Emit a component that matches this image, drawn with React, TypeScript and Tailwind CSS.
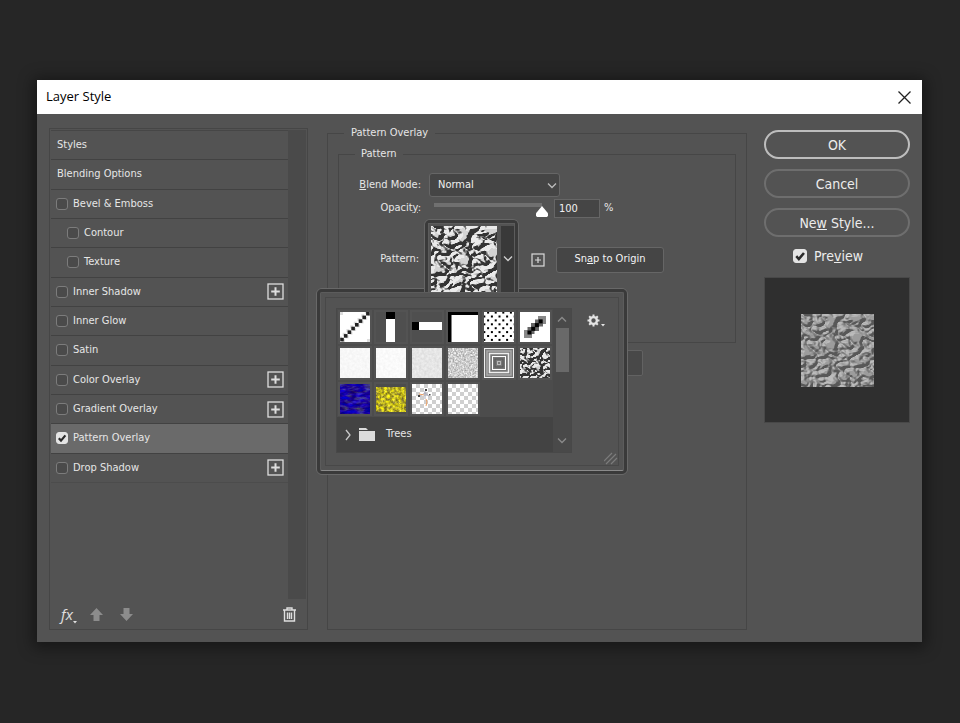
import React from "react";

type Effect = { name: string; level?: number; checked?: boolean; add?: boolean };

const effects: Effect[] = [
  { name: "Bevel & Emboss" },
  { name: "Contour", level: 1 },
  { name: "Texture", level: 1 },
  { name: "Inner Shadow", add: true },
  { name: "Inner Glow" },
  { name: "Satin" },
  { name: "Color Overlay", add: true },
  { name: "Gradient Overlay", add: true },
  { name: "Pattern Overlay", checked: true },
  { name: "Drop Shadow", add: true },
];

/* ---------- icons ---------- */

function PlusBox({ size }: { size: number }) {
  return (
    <svg width={size} height={size} viewBox="0 0 17 17" fill="none" stroke="#dedede" aria-hidden="true">
      <rect x="1" y="1" width="15" height="15" strokeWidth="1.3" />
      <path d="M8.5 4.2v8.6M4.2 8.5h8.6" strokeWidth="2" />
    </svg>
  );
}

function Chevron({ dir, className }: { dir: "up" | "down" | "right"; className?: string }) {
  const d = { up: "M1 6.5 5 2.5l4 4", down: "M1 2.5l4 4 4-4", right: "M3 0l4 5-4 5" }[dir];
  return (
    <svg width="10" height="10" viewBox="0 0 10 10" fill="none" stroke="currentColor" strokeWidth="1.3" overflow="visible" className={className} aria-hidden="true">
      <path d={d} />
    </svg>
  );
}

function Tick({ className }: { className: string }) {
  return (
    <svg viewBox="0 0 12 12" fill="none" stroke="#2a2a2a" strokeWidth="2.2" className={className} aria-hidden="true">
      <path d="M2.8 6.2 5 8.6 9.4 3.4" />
    </svg>
  );
}

function CheckBox({ id, checked, big }: { id: string; checked?: boolean; big?: boolean }) {
  return (
    <span className={big ? "relative block size-[14px] shrink-0" : "relative block size-3 shrink-0"}>
      <input
        id={id}
        type="checkbox"
        defaultChecked={checked}
        className="peer block size-full appearance-none rounded-[3px] border border-[#7c7c7c] bg-[#4a4a4a] checked:border-[#e4e4e4] checked:bg-[#e4e4e4]"
      />
      <Tick className="pointer-events-none absolute inset-0 hidden size-full peer-checked:block" />
    </span>
  );
}

/* ---------- pattern swatches ---------- */

function Marble({ id, size, soft, freq = 0.09 }: { id: string; size: number; soft?: boolean; freq?: number }) {
  const slope = soft ? 0.9 : 2.2;
  const intercept = soft ? 0.02 : -0.6;
  const low = soft ? 0.34 : 0.2;
  const range = soft ? 0.44 : 0.72;
  return (
    <svg width={size} height={size} className="block" aria-hidden="true">
      <filter id={id} x="0" y="0" width="100%" height="100%" colorInterpolationFilters="sRGB">
        <feTurbulence type="turbulence" baseFrequency={`${freq * 0.8} ${freq * 1.1}`} numOctaves={2} seed={12} />
        <feColorMatrix values="0 0 0 0 0  0 0 0 0 0  0 0 0 0 0  2.4 0 0 0 0" />
        <feGaussianBlur stdDeviation="0.5" />
        <feDiffuseLighting surfaceScale="4" diffuseConstant="1" lightingColor="#fff">
          <feDistantLight azimuth="230" elevation="42" />
        </feDiffuseLighting>
        <feComponentTransfer>
          <feFuncR type="linear" slope={slope} intercept={intercept} />
          <feFuncG type="linear" slope={slope} intercept={intercept} />
          <feFuncB type="linear" slope={slope} intercept={intercept} />
        </feComponentTransfer>
        <feComponentTransfer>
          <feFuncR type="linear" slope={range} intercept={low} />
          <feFuncG type="linear" slope={range} intercept={low} />
          <feFuncB type="linear" slope={range} intercept={low} />
        </feComponentTransfer>
      </filter>
      <rect width={size} height={size} filter={`url(#${id})`} />
    </svg>
  );
}

function Grain({ id, matrix, freq, height = 30 }: { id: string; matrix: string; freq: string; height?: number }) {
  return (
    <svg width="30" height={height} className="block" aria-hidden="true">
      <filter id={id} x="0" y="0" width="100%" height="100%" colorInterpolationFilters="sRGB">
        <feTurbulence type="fractalNoise" baseFrequency={freq} numOctaves={3} seed={4} />
        <feColorMatrix values={matrix} />
      </filter>
      <rect width="30" height={height} filter={`url(#${id})`} />
    </svg>
  );
}

function Drawn({ children, bg = "#fff" }: { children?: React.ReactNode; bg?: string }) {
  return (
    <svg width="30" height="30" viewBox="0 0 30 30" className="block" aria-hidden="true">
      <rect width="30" height="30" fill={bg} />
      {children}
    </svg>
  );
}

const steps = [0, 1, 2, 3, 4, 5, 6, 7];

function Checker() {
  return (
    <g fill="#cfcfcf">
      {steps.flatMap((r) =>
        steps.filter((c) => (r + c) % 2 === 1).map((c) => <rect key={`${r}-${c}`} x={c * 4} y={r * 4} width="4" height="4" />),
      )}
    </g>
  );
}

const swatches: [string, React.ReactNode][] = [
  ["Diagonal line", (
    <Drawn>
      {steps.map((i) => (
        <g key={i}>
          <rect x={i * 3.7 - 1} y={24.500 - i * 3.7} width="3" height="3" fill="#ddd" />
          <rect x={i * 3.7 + 2} y={27 - i * 3.7} width="3" height="3" fill="#ddd" />
          <rect x={i * 3.7 + 0.2} y={25.800 - i * 3.7} width="3.600" height="3.600" fill="#222" />
        </g>
      ))}
      <path d="M0 0h3v3H0zM27 27h3v3h-3z" fill="#ddd" />
    </Drawn>
  )],
  ["Vertical line", (
    <Drawn bg="#4f4f4f">
      <rect x="10" width="9" height="30" fill="#fff" />
      <rect x="10" width="9" height="7" />
    </Drawn>
  )],
  ["Horizontal line", (
    <Drawn bg="#4f4f4f">
      <rect y="10" width="30" height="8" fill="#fff" />
      <rect y="10" width="7" height="8" />
    </Drawn>
  )],
  ["Grid", (
    <Drawn>
      <path d="M0 0h30v3H3.500v27H0z" />
    </Drawn>
  )],
  ["Dots", (
    <Drawn>
      {steps.flatMap((r) =>
        [0, 1, 2, 3, 4].map((c) => (
          <rect key={`${r}-${c}`} x={c * 7.6 + (r % 2 ? -0.7 : 3.1)} y={r * 3.9 - 0.4} width="2" height="2" />
        )),
      )}
    </Drawn>
  )],
  ["Thick diagonal", (
    <Drawn>
      <g fill="#888">
        <rect x="4" y="18" width="8" height="8" />
        <rect x="18" y="4" width="8" height="8" />
        <rect x="7.500" y="15" width="7" height="7" fill="#666" />
        <rect x="11" y="11" width="8" height="8" fill="#666" />
        <rect x="15" y="7.500" width="8" height="7" fill="#666" />
      </g>
      {[0, 1, 2, 3].map((i) => (
        <rect key={i} x={7.5 + i * 3.7} y={18.500 - i * 3.7} width="4" height="4" />
      ))}
    </Drawn>
  )],
  ["Light paper", <Grain id="g1" freq="0.4" matrix=".06 0 0 0 .94  .06 0 0 0 .94  .06 0 0 0 .94  0 0 0 0 1" />],
  ["White paper", <Grain id="g2" freq="0.4" matrix=".06 0 0 0 .95  .06 0 0 0 .95  .06 0 0 0 .95  0 0 0 0 1" />],
  ["Gray paper", <Grain id="g3" freq="0.4" matrix=".12 0 0 0 .84  .12 0 0 0 .84  .12 0 0 0 .84  0 0 0 0 1" />],
  ["Gray granite", <Grain id="g4" freq="0.6" matrix=".6 0 0 0 .5  .6 0 0 0 .5  .6 0 0 0 .5  0 0 0 0 1" />],
  ["Concentric squares", (
    <Drawn bg="#777">
      <g fill="none" stroke="#eee">
        <rect x=".5" y=".5" width="29" height="29" strokeWidth="1" />
        <rect x="3" y="3" width="24" height="24" stroke="#aaa" strokeWidth="1.500" />
        <rect x="5.500" y="5.500" width="19" height="19" strokeWidth="1.500" />
        <rect x="8.500" y="8.500" width="13" height="13" stroke="#fff" />
        <rect x="11" y="11" width="8" height="8" stroke="#555" />
        <rect x="13.500" y="13.500" width="3" height="3" stroke="#bbb" />
      </g>
    </Drawn>
  )],
  ["Marble", <Marble id="m3" size={30} freq={0.16} />],
  ["Blue water", <Grain id="g5" freq="0.12 0.3" matrix=".5 0 0 0 -.12  .8 0 0 0 -.36  0 .7 0 0 .25  0 0 0 0 1" />],
  ["Yellow flowers", (
    <span className="flex h-[30px] items-center">
      <Grain id="g6" freq="0.35" height={25} matrix="1 0 0 0 .24  1 0 0 0 .2  0 .4 0 0 -.06  0 0 0 0 1" />
    </span>
  )],
  ["Figure", (
    <Drawn>
      <Checker />
      <path d="M13 5h2v2h-2zM6 11h2v2H6zM17 10h1.500v1.500H17z" fill="#444" />
      <path d="M8 12l5-3 4 3M13 7v8" stroke="#aab" fill="none" />
      <path d="M7 10l5 1M14 15l1 3-1 4" stroke="#eda266" fill="none" />
    </Drawn>
  )],
  ["Transparent", <Drawn><Checker /></Drawn>],
];

/* ---------- panels ---------- */

function EffectList() {
  const row = "flex items-center border-b border-[#424242] pr-1";
  return (
    <aside className="flex w-[259px] shrink-0 flex-col border border-[#464646] px-px pt-px">
      <div className="flex flex-1">
        <div className="min-w-0 flex-1 border-t border-[#464646]">
          <ul className="grid h-[352px] auto-rows-fr">
            <li className={`${row} pl-[6px]`}><button className="w-full text-left">Styles</button></li>
            <li className={`${row} pl-[6px]`}><button className="w-full text-left">Blending Options</button></li>
            {effects.map((e) => {
              const id = e.name.replace(/\W+/g, "-").toLowerCase();
              return (
                <li key={e.name} className={`${row} gap-[5px] ${e.level ? "pl-4" : "pl-[5px]"} ${e.checked ? "bg-[#6a6a6a]" : ""} last:border-[#4c4c4c]`}>
                  <CheckBox id={id} checked={e.checked} />
                  <label htmlFor={id} className="flex-1">{e.name}</label>
                  {e.add && (
                    <button aria-label={`Add ${e.name}`} title={`Add ${e.name}`}><PlusBox size={17} /></button>
                  )}
                </li>
              );
            })}
          </ul>
        </div>
        <div className="w-[18px] bg-[#4a4a4a]" />
      </div>
      <div className="flex h-[30px] items-center pr-[10px] pl-[10px] text-[#8c8c8c]">
        <button aria-label="Effects" className="flex w-[29px] items-end text-[#e0e0e0]">
          <span className="font-['Open_Sans',sans-serif] text-[15px] leading-5 font-medium italic">fx</span>
          <svg width="4" height="3" viewBox="0 0 4 3" fill="currentColor" aria-hidden="true"><path d="M0 0h4L2 2.500z" /></svg>
        </button>
        <button aria-label="Move up" className="mr-[17px]">
          <svg width="13" height="13" viewBox="0 0 13 13" fill="currentColor" aria-hidden="true"><path d="M6.500 0 13 7H9.500v6h-6V7H0z" /></svg>
        </button>
        <button aria-label="Move down">
          <svg width="13" height="13" viewBox="0 0 13 13" fill="currentColor" aria-hidden="true"><path d="M6.500 13 13 6H9.500V0h-6v6H0z" /></svg>
        </button>
        <button aria-label="Delete" className="ml-auto text-[#dedede]">
          <svg width="13" height="15" viewBox="0 0 13 15" fill="none" stroke="currentColor" strokeWidth="1.400" aria-hidden="true">
            <path d="M0 3h13M4 3V1h5v2M1.500 3v11h10V3M4.500 5.500v6.500M6.500 5.500v6.500M8.500 5.500v6.500" />
          </svg>
        </button>
      </div>
    </aside>
  );
}

function PatternPopup() {
  return (
    <div className="absolute top-[69px] -left-[108px] w-[312px] rounded-[6px] border border-[#686868]">
      <div className="rounded-[5px] border-[3px] border-[#3a3a3a]">
        <div className="rounded-[2px] border border-[#5c5c5c] border-b-[#8a8a8a] bg-[#535353] p-1">
          <div className="flex border border-[#484848] bg-[#535353] pt-[10px] pb-3 pl-[10px]">
            <div className="flex w-[236px] border border-[#484848] bg-[#4c4c4c]">
              <div className="min-w-0 flex-1">
                <div className="grid grid-cols-[repeat(6,30px)] gap-[6px] px-[3px] py-[3px]">
                  {swatches.map(([name, art]) => (
                    <button key={name} title={name} aria-label={name} className="size-[30px] outline-2 outline-[#535353]">{art}</button>
                  ))}
                </div>
                <button className="flex h-[35px] w-full items-center bg-[#434343] pl-1 text-left">
                  <Chevron dir="right" className="ml-[2px] text-[#c8c8c8]" />
                  <svg width="17" height="13" viewBox="0 0 17 13" fill="#dcdcdc" className="mr-[10px] ml-[6px]" aria-hidden="true">
                    <path d="M0 0h7l2 2h-9zM0 3h16v10H0z" />
                  </svg>
                  Trees
                </button>
              </div>
              <div className="flex w-[18px] flex-col items-center bg-[#494949] py-[6px] text-[#8a8a8a]">
                <Chevron dir="up" />
                <div className="mt-[3px] h-11 w-[13px] bg-[#696969]" />
                <Chevron dir="down" className="mt-auto" />
              </div>
            </div>
            <div className="flex flex-1 flex-col justify-between pl-[15px]">
              <button aria-label="Pattern options" className="flex items-end pt-[6px] text-[#e4e4e4]">
                <svg width="13" height="13" viewBox="0 0 13 13" aria-hidden="true">
                  <circle cx="6.500" cy="6.500" r="3.400" fill="none" stroke="currentColor" strokeWidth="2.400" />
                  <path d="M6.500 .5v2.500M6.500 10v2.500M.5 6.500h2.500M10 6.500h2.500M2.200 2.200l2 2M8.800 8.800l2 2M2.200 10.800l2-2M8.800 4.200l2-2" stroke="currentColor" strokeWidth="2" />
                </svg>
                <svg width="4" height="3" viewBox="0 0 4 3" fill="currentColor" className="ml-px" aria-hidden="true"><path d="M0 0h4L2 2.500z" /></svg>
              </button>
              <svg width="14" height="13" viewBox="0 0 14 13" className="-mb-3 self-end" stroke="#7c7c7c" strokeWidth="1.200" aria-hidden="true">
                <path d="M0 9 8 1M2 12 12 2M7 12l6-6" />
              </svg>
            </div>
          </div>
        </div>
      </div>
    </div>
  );
}

function PatternPicker() {
  return (
    <div className="relative ml-[3px] h-[73px] w-[95px] shrink-0">
      <PatternPopup />
      <button aria-label="Pattern: Marble" className="relative block h-full w-full rounded-t-[6px] border border-b-0 border-[#666]">
        <span className="block h-full rounded-t-[5px] border-[3px] border-b-0 border-[#3a3a3a]">
          <span className="flex h-full border border-b-0 border-[#5c5c5c] bg-[#535353] pt-[2px] pl-[2px]">
            <span className="block h-[66px] overflow-hidden"><Marble id="m1" size={67} /></span>
            <span className="ml-1 flex w-[13px] items-center justify-center bg-[#393939] text-[#d0d0d0]">
              <Chevron dir="down" />
            </span>
          </span>
        </span>
      </button>
    </div>
  );
}

function Settings() {
  return (
    <fieldset className="mt-[11px] min-w-0 flex-1 border border-[#464646] px-[10px] pt-[5px]">
      <legend className="ml-[6px] px-[7px] leading-4">Pattern Overlay</legend>
      <fieldset className="h-[197px] min-w-0 border border-[#464646] pt-[11px]">
        <legend className="ml-[16px] px-[6px] leading-4">Pattern</legend>
        <div className="flex items-center">
          <label htmlFor="mode" className="w-[82px] text-right"><u>B</u>lend Mode:</label>
          <span className="relative ml-2 block w-[131px]">
            <select id="mode" className="block h-6 w-full appearance-none rounded-[3px] border border-[#666] bg-[#454545] pl-2 text-[#f0f0f0]">
              <option>Normal</option>
              <option>Multiply</option>
            </select>
            <Chevron dir="down" className="pointer-events-none absolute top-2 right-[3px] text-[#bdbdbd]" />
          </span>
        </div>
        <div className="flex h-[22px] items-center">
          <label htmlFor="opacity" className="w-[82px] text-right">Opacit<u>y</u>:</label>
          <input
            id="opacity"
            type="range"
            defaultValue={100}
            className="mt-1 ml-[13px] block h-[14px] w-[114px] appearance-none bg-transparent bg-[linear-gradient(#707070,#707070)] bg-[length:108px_4px] bg-no-repeat [&::-webkit-slider-runnable-track]:h-[14px] [&::-webkit-slider-thumb]:mt-[3px] [&::-webkit-slider-thumb]:h-[11px] [&::-webkit-slider-thumb]:w-3 [&::-webkit-slider-thumb]:appearance-none [&::-webkit-slider-thumb]:bg-white [&::-webkit-slider-thumb]:[clip-path:polygon(50%_0,100%_65%,100%_90%,90%_100%,10%_100%,0_90%,0_65%)]"
          />
          <input aria-label="Opacity percent" defaultValue="100" className="ml-[6px] h-[19px] w-[46px] border border-[#666] bg-[#454545] pl-1 text-[#f0f0f0]" />
          <span className="ml-1">%</span>
        </div>
        <div className="flex items-center">
          <span className="w-[82px] pt-2 pr-[2px] text-right">Pattern:</span>
          <PatternPicker />
          <button aria-label="New preset" className="mt-2 ml-[12px]">
            <svg width="14" height="14" viewBox="0 0 14 14" fill="none" stroke="#dadada" strokeWidth="1.200" aria-hidden="true">
              <rect x="1" y="1" width="12" height="12" />
              <path d="M7 4v6M4 7h6" />
            </svg>
          </button>
          <button className="mt-2 ml-[11px] h-[26px] w-[108px] rounded-[3px] border border-[#666] bg-[#454545] text-[#f4f4f4]">
            Sn<u>a</u>p to Origin
          </button>
        </div>
      </fieldset>
      <input aria-label="Scale percent" className="mt-[7px] ml-[259px] block h-[26px] w-[46px] rounded-[2px] border border-[#626262] bg-[#484848]" />
    </fieldset>
  );
}

function Actions() {
  const pill = "h-[29px] rounded-full border-2";
  return (
    <div className="flex w-[146px] shrink-0 flex-col pt-[2px] text-sm text-[#ececec]">
      <button className={`${pill} border-[#bdbdbd]`}>OK</button>
      <button className={`${pill} mt-[10px] border-[#6e6e6e]`}>Cancel</button>
      <button className={`${pill} mt-[10px] border-[#6e6e6e]`}>Ne<u>w</u> Style...</button>
      <div className="mt-[9px] flex h-5 items-center gap-[7px] pl-[29px]">
        <CheckBox id="preview" checked big />
        <label htmlFor="preview">Pre<u>v</u>iew</label>
      </div>
      <div className="mt-[11px] flex h-[146px] items-center justify-center border border-[#484848] bg-[#2f2f2f]">
        <Marble id="m2" size={73} soft freq={0.1} />
      </div>
    </div>
  );
}

export default function App() {
  return (
    <main className="flex min-h-screen bg-[#262626] pt-20 pr-[38px] pb-[81px] pl-[37px] font-['DejaVu_Sans_Condensed','DejaVu_Sans',sans-serif] text-[11px] text-[#e6e6e6]">
      <section className="flex w-full flex-col shadow-[0_2px_14px_4px_rgba(0,0,0,0.4)]">
        <header className="flex h-[34px] items-center justify-between bg-white pr-[11px] pl-[9px] text-black">
          <h1 className="font-['Open_Sans','Noto_Sans',sans-serif] text-[13px]">Layer Style</h1>
          <button aria-label="Close">
            <svg width="13" height="13" viewBox="0 0 13 13" fill="none" stroke="#222" strokeWidth="1.300" aria-hidden="true"><path d="M.5.5l12 12M12.500.5l-12 12" /></svg>
          </button>
        </header>
        <div className="flex flex-1 bg-[#535353] px-3 pt-[14px] pb-3">
          <EffectList />
          <div className="-mt-[14px] mr-[17px] ml-[19px] flex min-w-0 flex-1">
            <Settings />
          </div>
          <Actions />
        </div>
      </section>
    </main>
  );
}
